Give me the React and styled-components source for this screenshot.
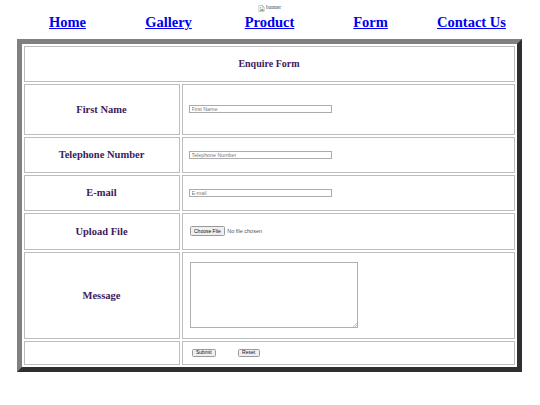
import React from 'react';
import styled, { createGlobalStyle } from 'styled-components';

const GlobalStyle = createGlobalStyle`
  html, body {
    margin: 0;
    padding: 0;
    background: #ffffff;
    font-family: "Liberation Serif", "Times New Roman", serif;
  }
`;

const Page = styled.div`
  width: 540px;
  padding: 4px 0 0 17px;
  box-sizing: border-box;
`;

const Header = styled.header`
  width: 505px;
`;

const Banner = styled.div`
  height: 8px;
  display: flex;
  justify-content: center;
  align-items: center;
  gap: 1px;
  font-size: 5.5px;
  color: #444;
  line-height: 1;
`;

const Nav = styled.nav`
  display: grid;
  grid-template-columns: repeat(5, 1fr);
  height: 18px;
  margin-top: 1px;
`;

const NavLink = styled.a`
  text-align: center;
  font-size: 14.5px;
  font-weight: bold;
  line-height: 18px;
  color: #0000ee;
  text-decoration: underline;
  text-decoration-thickness: 1px;
`;

const FormTable = styled.form`
  display: grid;
  grid-template-columns: 156px 333px;
  grid-template-rows: 36px 51px 36px 36px 37px 87px 24px;
  gap: 2px;
  padding: 1.5px 2px 2px 1.5px;
  margin-top: 8px;
  width: 505px;
  box-sizing: border-box;
  border: 5px solid;
  border-color: #808080 #2f2f2f #2f2f2f #808080;
  background: #ffffff;
`;

const Cell = styled.div`
  border: 1px solid #bdbdbd;
  display: flex;
  align-items: center;
  justify-content: ${(p) => (p.$center ? 'center' : 'flex-start')};
  padding-left: ${(p) => p.$pad || 0}px;
  ${(p) => p.$span && 'grid-column: 1 / -1;'}
  min-width: 0;
`;

const Heading = styled.h3`
  margin: 0;
  font-size: 10px;
  font-weight: bold;
  color: #3d1a5b;
`;

const Label = styled.label`
  font-size: 10.5px;
  font-weight: bold;
  color: #3d1a5b;
`;

const TextInput = styled.input`
  width: 143px;
  height: 8px;
  box-sizing: border-box;
  border: 1px solid #ababab;
  padding: 0 2px;
  font-family: "Liberation Sans", Arial, sans-serif;
  font-size: 5.3px;
  line-height: 1;
  background: #fff;
  outline: none;

  &::placeholder {
    color: #7a7a7a;
  }
`;

const SmallButton = styled.button`
  height: ${(p) => p.$h || 8}px;
  padding: 0 3.5px;
  border: 1px solid #9a9a9a;
  border-radius: 1.5px;
  background: #efefef;
  font-family: "Liberation Sans", Arial, sans-serif;
  font-size: 5px;
  line-height: 1;
  color: #111;
  margin-left: ${(p) => p.$gap || 0}px;
`;

const FileHint = styled.span`
  margin-left: 2px;
  font-family: "Liberation Sans", Arial, sans-serif;
  font-size: 5.5px;
  color: #555;
`;

const AreaWrap = styled.div`
  position: relative;
  width: 168px;
  height: 66px;
`;

const TextArea = styled.textarea`
  width: 168px;
  height: 66px;
  box-sizing: border-box;
  border: 1px solid #b0b0b0;
  resize: none;
  display: block;
  outline: none;
`;

const Grip = styled.svg`
  position: absolute;
  right: 1px;
  bottom: 1px;
`;

const BrokenImage = () => (
  <svg width="7" height="7" viewBox="0 0 16 16">
    <path d="M2 1h8l4 4v10H2z" fill="#fff" stroke="#9a9a9a" strokeWidth="1.2" />
    <path d="M10 1v4h4" fill="none" stroke="#9a9a9a" strokeWidth="1.2" />
    <path d="M4 13l3-4 2 2 2-3 2 5z" fill="#5a9e4b" />
    <circle cx="6" cy="6.5" r="1.3" fill="#4a8fd4" />
  </svg>
);

const links = ['Home', 'Gallery', 'Product', 'Form', 'Contact Us'];

const fields = [
  { label: 'First Name', type: 'text' },
  { label: 'Telephone Number', type: 'tel' },
  { label: 'E-mail', type: 'email' },
];

export default function App() {
  return (
    <Page>
      <GlobalStyle />
      <Header>
        <Banner>
          <BrokenImage />
          <span>banner</span>
        </Banner>
        <Nav>
          {links.map((l) => (
            <NavLink key={l} href="#">{l}</NavLink>
          ))}
        </Nav>
      </Header>

      <FormTable onSubmit={(e) => e.preventDefault()}>
        <Cell $span $center>
          <Heading>Enquire Form</Heading>
        </Cell>

        {fields.map((f) => (
          <React.Fragment key={f.label}>
            <Cell $center>
              <Label>{f.label}</Label>
            </Cell>
            <Cell $pad={6}>
              <TextInput type={f.type} placeholder={f.label} />
            </Cell>
          </React.Fragment>
        ))}

        <Cell $center>
          <Label>Upload File</Label>
        </Cell>
        <Cell $pad={7}>
          <SmallButton type="button" $h={9.5}>Choose File</SmallButton>
          <FileHint>No file chosen</FileHint>
        </Cell>

        <Cell $center>
          <Label>Message</Label>
        </Cell>
        <Cell $pad={7}>
          <AreaWrap>
            <TextArea />
            <Grip width="4" height="4" viewBox="0 0 4 4">
              <path d="M4 0L0 4M4 2L2 4" stroke="#9a9a9a" strokeWidth="0.6" />
            </Grip>
          </AreaWrap>
        </Cell>

        <Cell />
        <Cell $pad={9}>
          <SmallButton type="submit">Submit</SmallButton>
          <SmallButton type="reset" $gap={21.5}>Reset</SmallButton>
        </Cell>
      </FormTable>
    </Page>
  );
}
